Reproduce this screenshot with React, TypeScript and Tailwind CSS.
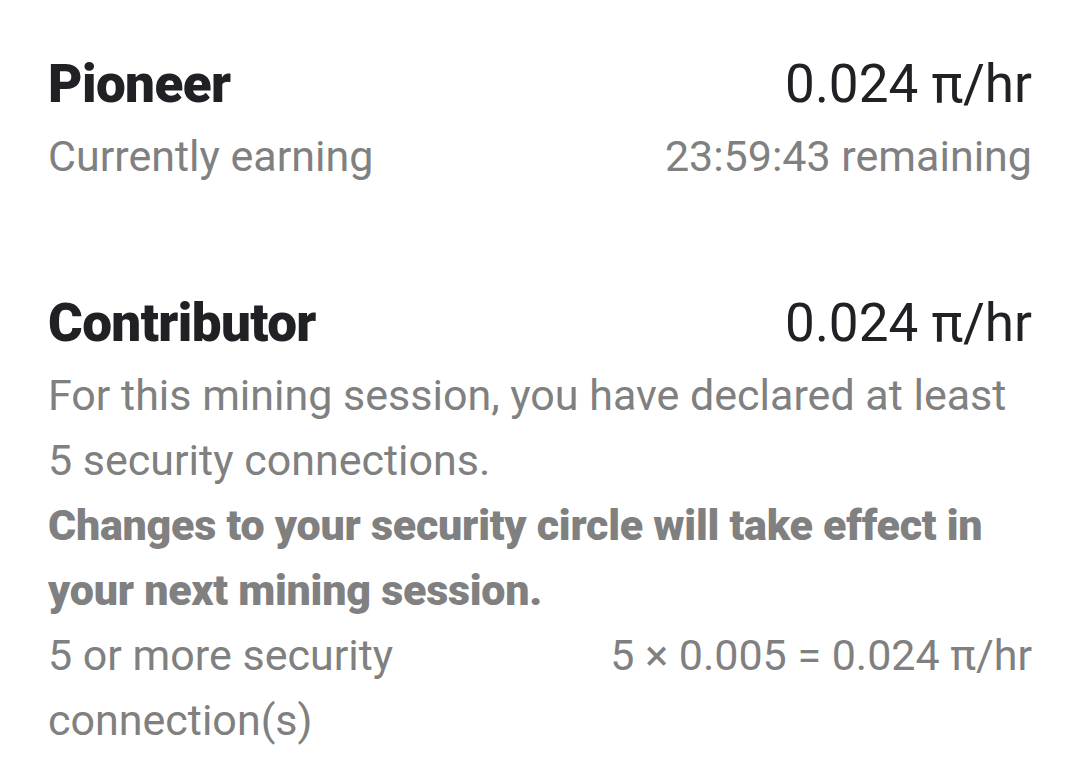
export default function App() {
  return (
    <div
      className="min-h-screen bg-white px-[48px] pt-[44px] text-[#808080]"
      style={{ fontFamily: "Roboto, 'Noto Sans', sans-serif" }}
    >
      {/* Pioneer */}
      <section>
        <div className="flex items-baseline justify-between leading-[80px]">
          <h2 className="text-[53px] font-black tracking-[-0.6px] text-[#202125]">Pioneer</h2>
          <span className="text-[53px] text-[#202125]">0.024 π/hr</span>
        </div>
        <div className="flex justify-between text-[43px] leading-[65px]">
          <span>Currently earning</span>
          <span>23:59:43 remaining</span>
        </div>
      </section>

      {/* Contributor */}
      <section className="mt-[94px]">
        <div className="flex items-baseline justify-between leading-[80px]">
          <h2 className="text-[53px] font-black tracking-[-0.6px] text-[#202125]">Contributor</h2>
          <span className="text-[53px] text-[#202125]">0.024 π/hr</span>
        </div>
        <p className="text-[43px] leading-[65px]">
          For this mining session, you have declared at least 5 security connections.
        </p>
        <p className="text-[43px] font-black leading-[65px] tracking-[-0.25px]">
          Changes to your security circle will take effect in your next mining session.
        </p>
        <div className="flex gap-5 text-[43px] leading-[65px]">
          <span className="flex-1">5 or more security connection(s)</span>
          <span className="whitespace-nowrap">5 × 0.005 = 0.024 π/hr</span>
        </div>
      </section>
    </div>
  );
}
